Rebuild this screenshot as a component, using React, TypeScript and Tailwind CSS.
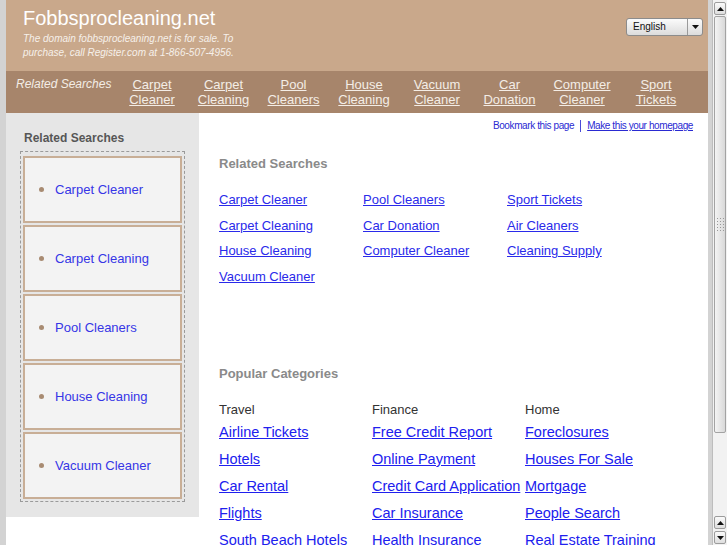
const navItems = [
  { top: "Carpet", bottom: "Cleaner", w: "w-[72px]" },
  { top: "Carpet", bottom: "Cleaning", w: "w-[71px]" },
  { top: "Pool", bottom: "Cleaners", w: "w-[69px]" },
  { top: "House", bottom: "Cleaning", w: "w-[72px]" },
  { top: "Vacuum", bottom: "Cleaner", w: "w-[74px]" },
  { top: "Car", bottom: "Donation", w: "w-[71px]" },
  { top: "Computer", bottom: "Cleaner", w: "w-[74px]" },
  { top: "Sport", bottom: "Tickets", w: "w-[74px]" },
];

const sideLinks = ["Carpet Cleaner", "Carpet Cleaning", "Pool Cleaners", "House Cleaning", "Vacuum Cleaner"];

const related = [
  ["Carpet Cleaner", "Carpet Cleaning", "House Cleaning", "Vacuum Cleaner"],
  ["Pool Cleaners", "Car Donation", "Computer Cleaner"],
  ["Sport Tickets", "Air Cleaners", "Cleaning Supply"],
];

const popular = [
  { title: "Travel", links: ["Airline Tickets", "Hotels", "Car Rental", "Flights", "South Beach Hotels"] },
  { title: "Finance", links: ["Free Credit Report", "Online Payment", "Credit Card Application", "Car Insurance", "Health Insurance"] },
  { title: "Home", links: ["Foreclosures", "Houses For Sale", "Mortgage", "People Search", "Real Estate Training"] },
];

function Arrow({ down }: { down?: boolean }) {
  return (
    <svg width="7" height="4" viewBox="0 0 7 4">
      <path d={down ? "M0 0 L7 0 L3.5 4 Z" : "M0 4 L7 4 L3.5 0 Z"} fill="#111" />
    </svg>
  );
}

function ScrollButton({ down }: { down?: boolean }) {
  return (
    <div className="mx-[1px] flex h-[13px] shrink-0 items-center justify-center rounded-[2px] border border-[#9c9c9c] bg-gradient-to-b from-[#fafafa] to-[#dedede]">
      <Arrow down={down} />
    </div>
  );
}

function Header() {
  return (
    <div className="flex h-[71px] shrink-0 justify-between bg-[#c9a88b]">
      <div className="pl-[17px] pt-[7px]">
        <div className="text-[20px] leading-[23px] text-white">Fobbsprocleaning.net</div>
        <div className="mt-[2px] w-[215px] text-[10px] italic leading-[14px] text-[#f6f0ea]">
          The domain fobbsprocleaning.net is for sale. To purchase, call Register.com at 1-866-507-4956.
        </div>
      </div>
      <div className="mr-[5px] mt-[18px] flex h-[18px] w-[77px] rounded-[3px] border border-[#8c8c8c] bg-gradient-to-b from-[#fbfbfb] to-[#dcdcdc]">
        <div className="flex-1 pl-[6px] text-[10px] leading-[16px] text-[#111]">English</div>
        <div className="flex w-[15px] items-center justify-center border-l border-[#9a9a9a]">
          <Arrow down />
        </div>
      </div>
    </div>
  );
}

function Nav() {
  return (
    <div className="flex h-[42px] shrink-0 items-start bg-[#a7856b] pt-[6px] text-[13px] leading-[15px] text-[#f4ede6]">
      <div className="w-[110px] pl-[10px] text-[12px] italic">Related Searches</div>
      {navItems.map((n) => (
        <div key={n.top + n.bottom} className={`${n.w} text-center`}>
          <span className="underline">{n.top}</span>
          <br />
          <span className="underline">{n.bottom}</span>
        </div>
      ))}
    </div>
  );
}

function Sidebar() {
  return (
    <div className="h-[404px] w-[193px] shrink-0 bg-[#e6e6e6]">
      <div className="pl-[18px] pt-[17px] text-[12px] font-bold leading-[16px] text-[#565656]">Related Searches</div>
      <div className="ml-[14px] mt-[5px] w-[165px] border border-dashed border-[#9a9a9a] px-[2px] pb-[2px] pt-[4px]">
        <div className="flex flex-col gap-[2px]">
          {sideLinks.map((s) => (
            <div key={s} className="flex h-[67px] items-center border-2 border-[#c8ae96] bg-[#f3f3f3] pl-[14px]">
              <span className="h-[5px] w-[5px] rounded-full bg-[#a88b72]" />
              <a className="ml-[11px] text-[13px] text-[#3636e6]">{s}</a>
            </div>
          ))}
        </div>
      </div>
    </div>
  );
}

function Main() {
  return (
    <div className="flex-1 bg-white">
      <div className="flex justify-end pr-[15px] pt-[7px] text-[10px] leading-[12px] tracking-[-0.4px] text-[#2a2ad2]">
        <span>Bookmark this page</span>
        <span className="mx-[6px] w-[1px] bg-[#4a4ad8]" />
        <span className="underline">Make this your homepage</span>
      </div>
      <div className="pl-[20px]">
        <div className="mt-[24px] text-[13px] font-bold leading-[16px] text-[#8a8a8a]">Related Searches</div>
        <div className="mt-[20px] flex">
          {related.map((col, i) => (
            <div key={i} className="flex w-[144px] flex-col">
              {col.map((l) => (
                <a key={l} className="h-[25.5px] text-[13px] leading-[16px] text-[#2a2aea] underline">
                  {l}
                </a>
              ))}
            </div>
          ))}
        </div>
        <div className="mt-[72px] text-[13px] font-bold leading-[16px] text-[#8a8a8a]">Popular Categories</div>
        <div className="mt-[20px] flex">
          {popular.map((c) => (
            <div key={c.title} className="flex w-[153px] flex-col">
              <div className="text-[13px] leading-[16px] text-[#333]">{c.title}</div>
              <div className="mt-[5.5px] flex flex-col">
                {c.links.map((l) => (
                  <a key={l} className="h-[27px] whitespace-nowrap text-[14.5px] leading-[17px] text-[#2020ee] underline">
                    {l}
                  </a>
                ))}
              </div>
            </div>
          ))}
        </div>
      </div>
    </div>
  );
}

function Scrollbar() {
  return (
    <div className="flex w-[15px] shrink-0 flex-col border-l border-[#bdbdbd] bg-[#f2f2f2] pb-[1px] pt-[2px]">
      <ScrollButton />
      <div className="mx-[1px] mt-[1px] flex h-[417px] shrink-0 flex-col items-center justify-center gap-[2px] rounded-[2px] border border-[#a3a3a3] bg-gradient-to-r from-[#f4f4f4] to-[#d9d9d9]">
        {[0, 1, 2, 3, 4].map((i) => (
          <div key={i} className="flex gap-[2px]">
            <span className="h-[1px] w-[1px] bg-[#999]" />
            <span className="h-[1px] w-[1px] bg-[#999]" />
            <span className="h-[1px] w-[1px] bg-[#999]" />
          </div>
        ))}
      </div>
      <div className="flex-1" />
      <ScrollButton />
      <div className="h-[2px] shrink-0" />
      <ScrollButton down />
    </div>
  );
}

export default function App() {
  return (
    <div className="flex h-[545px] w-[727px] overflow-hidden bg-[#d3d3d3] font-['Liberation_Sans',Arial,sans-serif]">
      <div className="w-[6px] shrink-0" />
      <div className="flex w-[702px] shrink-0 flex-col bg-white">
        <Header />
        <Nav />
        <div className="flex shrink-0">
          <Sidebar />
          <Main />
        </div>
      </div>
      <div className="w-[4px] shrink-0" />
      <Scrollbar />
    </div>
  );
}
